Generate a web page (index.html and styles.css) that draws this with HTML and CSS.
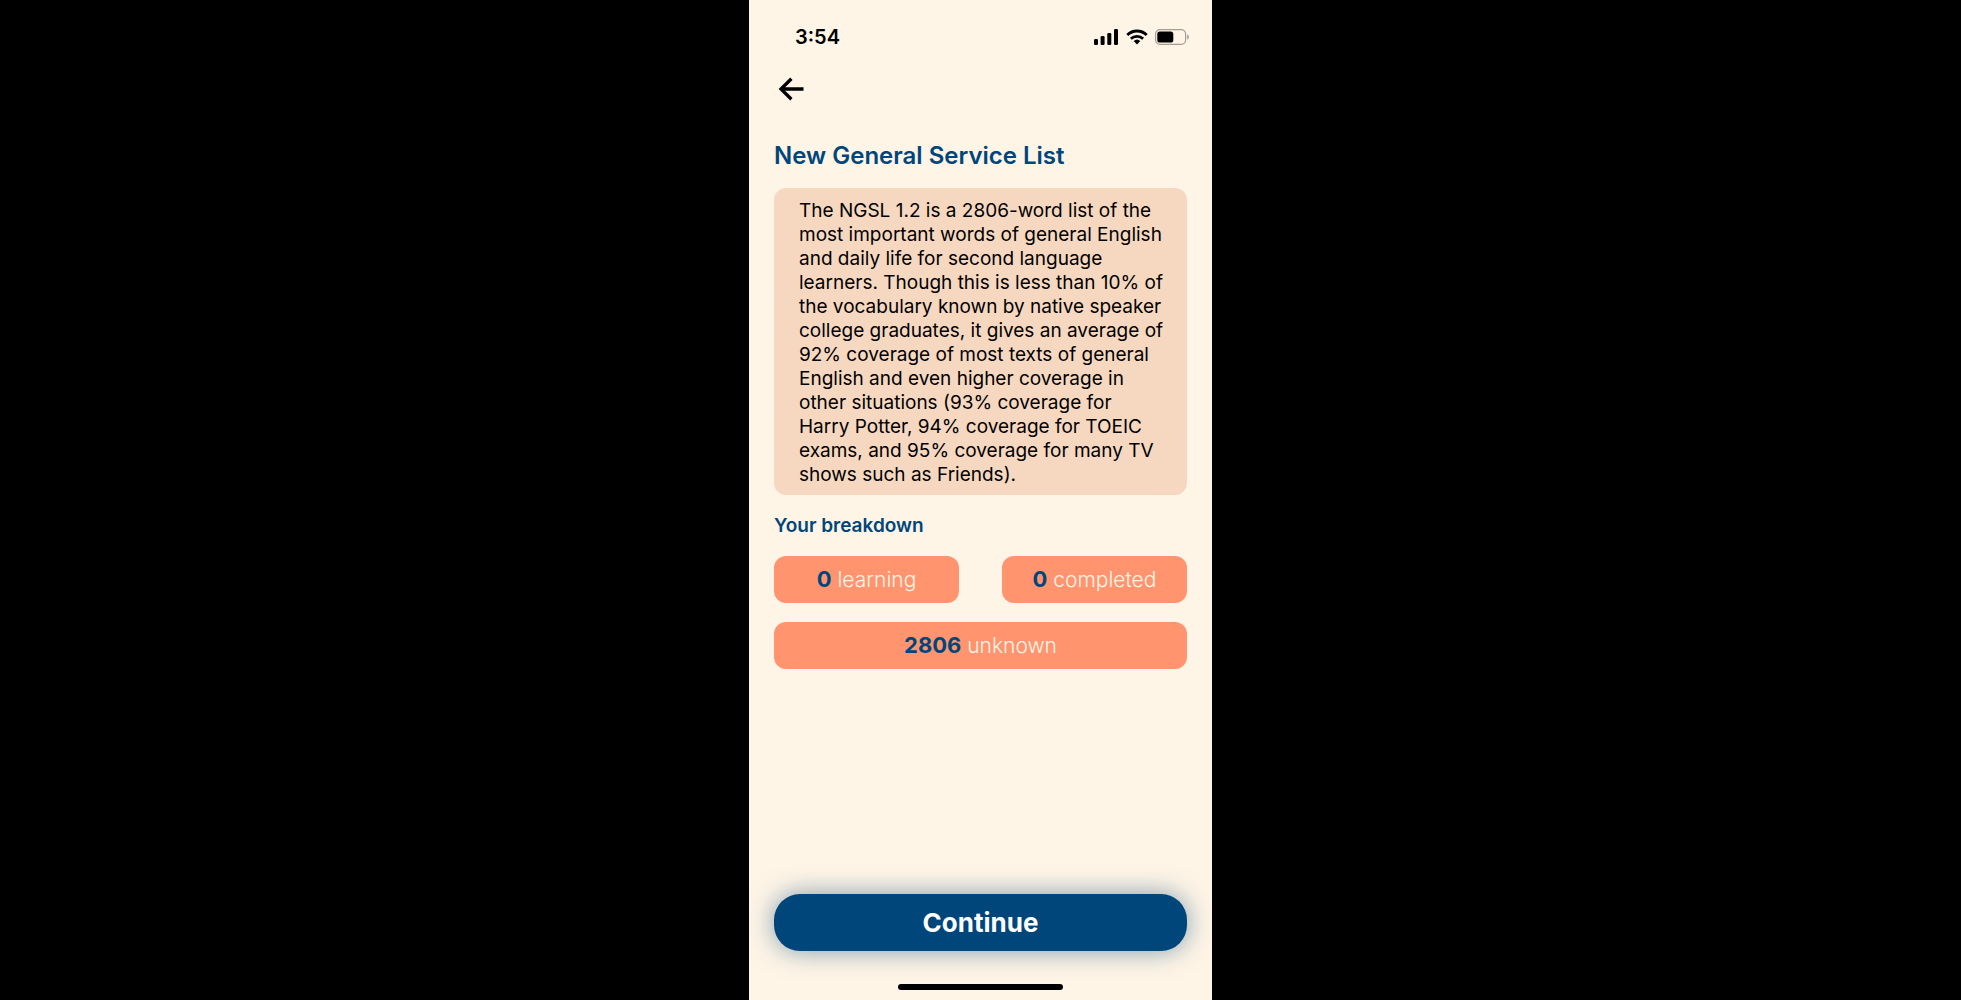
FILE: index.html
```html
<!DOCTYPE html>
<html lang="en">
<head>
<meta charset="utf-8">
<meta name="viewport" content="width=device-width, initial-scale=1">
<title>New General Service List</title>
<link rel="stylesheet" href="styles.css">
</head>
<body>
<div class="screen">
  <div class="status">
    <time class="clock">3:54</time>
    <div class="indicators">
      <svg width="25" height="16" viewBox="0 0 25 16" aria-hidden="true">
        <rect x="0" y="10" width="4" height="6" rx="1.3"/>
        <rect x="6.6" y="7" width="4" height="9" rx="1.3"/>
        <rect x="13.3" y="4" width="4" height="12" rx="1.3"/>
        <rect x="20" y="0" width="4" height="16" rx="1.3"/>
      </svg>
      <svg width="22" height="16" viewBox="0 0 22 16" fill="none" stroke="#000" stroke-width="2.8" aria-hidden="true">
        <path d="M1.3 6A13.8 13.8 0 0 1 20.7 6"/>
        <path d="M4.9 9.8A8.7 8.7 0 0 1 17.1 9.8"/>
        <path d="M11 15.4L7.7 12.1A4.8 4.8 0 0 1 14.3 12.1Z" fill="#000" stroke="none"/>
      </svg>
      <svg width="34" height="16" viewBox="0 0 34 16" aria-hidden="true">
        <rect x=".6" y=".6" width="30" height="14.8" rx="4.4" fill="none" stroke="#a39d94" stroke-width="1.2"/>
        <rect x="2.3" y="2.5" width="16" height="11" rx="2.6"/>
        <path d="M32.2 5.3Q34 6.2 34 8T32.2 10.7Z" fill="#a39d94"/>
      </svg>
    </div>
  </div>
  <button class="back" type="button" aria-label="Back">
    <svg width="26" height="24" viewBox="0 0 26 24" fill="none" stroke="#000" stroke-width="3.3" aria-hidden="true">
      <path d="M25.5 12H3M13.4 1.8L3 12L13.4 22.2"/>
    </svg>
  </button>
  <main class="content">
    <h1 class="title">New General Service List</h1>
    <p class="about">The NGSL 1.2 is a 2806-word list of the most important words of general English and daily life for second language learners. Though this is less than 10% of the vocabulary known by native speaker college graduates, it gives an average of 92% coverage of most texts of general English and even higher coverage in other situations (93% coverage for Harry Potter, 94% coverage for TOEIC exams, and 95% coverage for many TV shows such as Friends).</p>
    <h2 class="subtitle">Your breakdown</h2>
    <div class="stats">
      <div class="stat"><strong>0</strong> learning</div>
      <div class="stat"><strong>0</strong> completed</div>
      <div class="stat wide"><strong>2806</strong> unknown</div>
    </div>
  </main>
  <button class="continue" type="button">Continue</button>
  <div class="home"></div>
</div>
</body>
</html>
```
FILE: styles.css
```css
* {
  box-sizing: border-box;
  margin: 0;
}

body {
  background: #000;
  color: #000;
  font-family: Inter, "Liberation Sans", sans-serif;
}

.screen {
  display: flex;
  flex-direction: column;
  max-width: 463px;
  min-height: 100vh;
  margin: 0 auto;
  padding: 25px 25px 10px;
  background: #fef5e7;
}

.status {
  display: flex;
  align-items: center;
  justify-content: space-between;
  padding-left: 21px;
}

.clock {
  font-size: 20px;
  line-height: 24px;
  font-weight: 600;
}

.indicators {
  display: flex;
  gap: 7px;
  margin-right: -2px;
}

.back {
  display: flex;
  align-self: flex-start;
  margin-top: 24px;
  padding: 4px;
  border: 0;
  background: none;
}

.content {
  flex: 1;
}

.title {
  margin-top: 35px;
  color: #00467a;
  font-size: 24px;
  line-height: 32px;
  font-weight: 600;
}

.about {
  margin-top: 16px;
  padding: 11px 20px 8px 25px;
  border-radius: 12px;
  background: #f6d8c1;
  font-size: 19px;
  line-height: 24px;
}

.subtitle {
  margin-top: 19px;
  color: #00467a;
  font-size: 19px;
  line-height: 24px;
  font-weight: 600;
}

.stats {
  display: grid;
  grid-template-columns: 1fr 1fr;
  gap: 19px 43px;
  margin-top: 18px;
}

.stat {
  border-radius: 12px;
  background: #ff946e;
  color: #fef5e7;
  font-size: 21px;
  line-height: 46px;
  font-weight: 300;
  text-align: center;
}

.stat strong {
  color: #00467a;
  font-size: 22px;
  font-weight: 700;
}

.wide {
  grid-column: 1 / -1;
}

.continue {
  height: 57px;
  border: 0;
  border-radius: 26px;
  background: #00467a;
  box-shadow: 0 0 26px rgba(0, 70, 122, 0.5);
  color: #fff;
  font: inherit;
  font-size: 26px;
  font-weight: 700;
}

.home {
  width: 40%;
  height: 6px;
  margin: 33px auto 0;
  border-radius: 3px;
  background: #000;
}
```
